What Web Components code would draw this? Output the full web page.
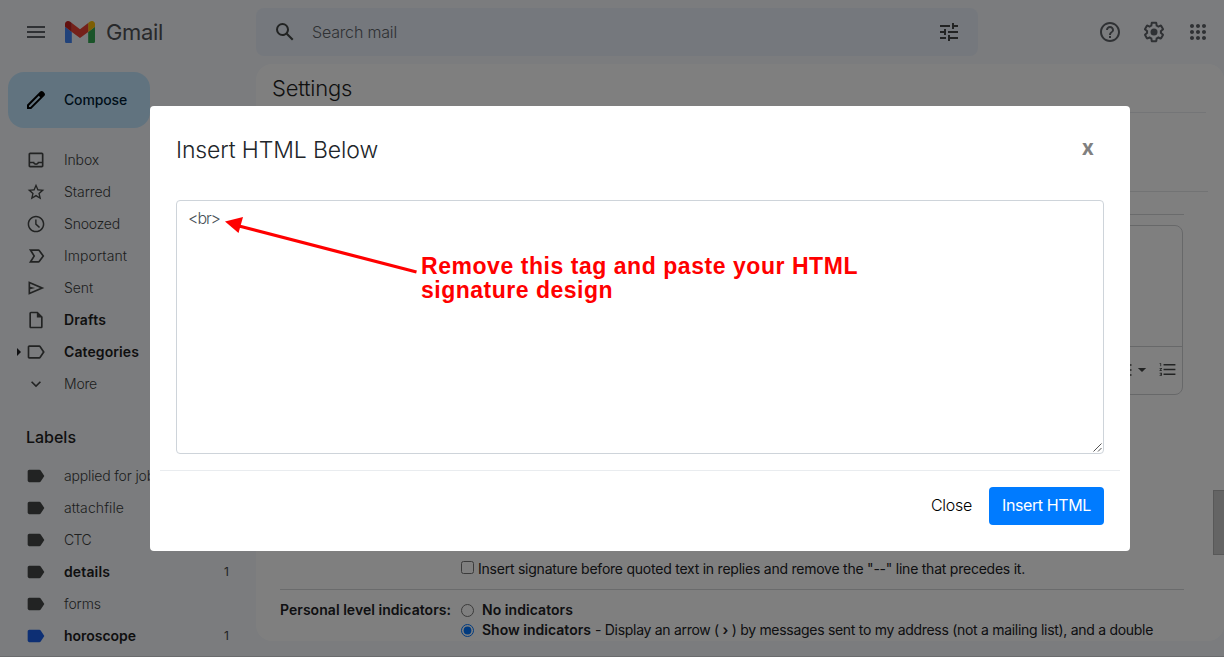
<!DOCTYPE html>
<html lang="en">
<head>
<meta charset="utf-8">
<title>Settings - Gmail</title>
<style>
  html, body { margin: 0; height: 100%; overflow: hidden; }
  body { font-family: Inter, "Liberation Sans", sans-serif; font-size: 14px; background: #f6f8fc; color: #202124; }
</style>
</head>
<body>
<gmail-app></gmail-app>
<modal-dialog heading="Insert HTML Below">
  <html-editor value="&lt;br&gt;">
    <arrow-note></arrow-note>
  </html-editor>
</modal-dialog>

<script>
const icons = {
  menu: '<path d="M3 18h18v-2H3v2zm0-5h18v-2H3v2zm0-7v2h18V6H3z"/>',
  pencil: '<path d="M20.41 4.94l-1.35-1.35c-.78-.78-2.05-.78-2.83 0L3 16.82V21h4.18L20.41 7.77c.79-.78.79-2.05 0-2.83zm-14 14.12L5 19v-1.36l9.82-9.82 1.41 1.41-9.82 9.83z"/>',
  search: '<path d="M20.49 19l-5.73-5.73C15.53 12.2 16 10.91 16 9.5A6.5 6.5 0 1 0 9.5 16c1.41 0 2.7-.47 3.77-1.24L19 20.49 20.49 19zM5 9.5C5 7.01 7.01 5 9.5 5S14 7.01 14 9.5 11.99 14 9.5 14 5 11.99 5 9.5z"/>',
  tune: '<path d="M3 17v2h6v-2H3zM3 5v2h10V5H3zm10 16v-2h8v-2h-8v-2h-2v6h2zM7 9v2H3v2h4v2h2V9H7zm14 4v-2H11v2h10zm-6-4h2V7h4V5h-4V3h-2v6z"/>',
  help: '<path d="M11 18h2v-2h-2v2zm1-16C6.48 2 2 6.48 2 12s4.48 10 10 10 10-4.48 10-10S17.52 2 12 2zm0 18c-4.41 0-8-3.59-8-8s3.59-8 8-8 8 3.59 8 8-3.59 8-8 8zm0-14c-2.21 0-4 1.79-4 4h2c0-1.1.9-2 2-2s2 .9 2 2c0 2-3 1.75-3 5h2c0-2.25 3-2.5 3-5 0-2.21-1.79-4-4-4z"/>',
  gear: '<path d="M13.85 22.25h-3.7c-.74 0-1.36-.54-1.45-1.27l-.27-1.89c-.27-.14-.53-.29-.79-.46l-1.8.72c-.7.26-1.47-.03-1.81-.65L2.2 15.53c-.35-.66-.2-1.44.36-1.88l1.53-1.19c-.01-.15-.02-.3-.02-.46 0-.15.01-.31.02-.46l-1.52-1.19c-.59-.45-.74-1.26-.37-1.88l1.85-3.19c.34-.62 1.11-.9 1.79-.63l1.81.73c.26-.17.52-.32.78-.46l.27-1.91c.09-.7.71-1.25 1.44-1.25h3.7c.74 0 1.36.54 1.45 1.27l.27 1.89c.27.14.53.29.79.46l1.8-.72c.71-.26 1.48.03 1.82.65l1.84 3.18c.36.66.2 1.44-.36 1.88l-1.52 1.19c.01.15.02.3.02.46s-.01.31-.02.46l1.52 1.19c.56.45.72 1.23.37 1.86l-1.86 3.22c-.34.62-1.11.9-1.8.63l-1.8-.72c-.26.17-.52.32-.78.46l-.27 1.91c-.1.68-.72 1.22-1.46 1.22zm-3.23-2h2.76l.37-2.55.53-.22c.44-.18.88-.44 1.34-.78l.45-.34 2.38.96 1.38-2.4-2.03-1.58.07-.56c.03-.26.06-.51.06-.78s-.03-.53-.06-.78l-.07-.56 2.03-1.58-1.39-2.4-2.39.96-.45-.35c-.42-.32-.87-.58-1.33-.77l-.52-.22-.37-2.55h-2.76l-.37 2.55-.53.21c-.44.19-.88.44-1.34.79l-.45.33-2.38-.95-1.39 2.39 2.03 1.58-.07.56a7 7 0 0 0-.06.79c0 .26.02.53.06.78l.07.56-2.03 1.58 1.38 2.4 2.39-.96.45.35c.43.33.86.58 1.33.77l.53.22.38 2.55z"/><circle cx="12" cy="12" r="3.5"/>',
  apps: '<path d="M6 8c1.1 0 2-.9 2-2s-.9-2-2-2-2 .9-2 2 .9 2 2 2zm6 12c1.1 0 2-.9 2-2s-.9-2-2-2-2 .9-2 2 .9 2 2 2zm-6 0c1.1 0 2-.9 2-2s-.9-2-2-2-2 .9-2 2 .9 2 2 2zm0-6c1.1 0 2-.9 2-2s-.9-2-2-2-2 .9-2 2 .9 2 2 2zm6 0c1.1 0 2-.9 2-2s-.9-2-2-2-2 .9-2 2 .9 2 2 2zm4-8c0 1.1.9 2 2 2s2-.9 2-2-.9-2-2-2-2 .9-2 2zm-4 2c1.1 0 2-.9 2-2s-.9-2-2-2-2 .9-2 2 .9 2 2 2zm6 6c1.1 0 2-.9 2-2s-.9-2-2-2-2 .9-2 2 .9 2 2 2zm0 6c1.1 0 2-.9 2-2s-.9-2-2-2-2 .9-2 2 .9 2 2 2z"/>',
  inbox: '<path d="M19 3H5c-1.1 0-2 .9-2 2v14c0 1.1.9 2 2 2h14c1.1 0 2-.9 2-2V5c0-1.1-.9-2-2-2zm0 16H5v-3h3.56c.69 1.19 1.97 2 3.45 2s2.75-.81 3.45-2H19v3zm0-5h-4.99c0 1.1-.9 2-2 2s-2-.9-2-2H5V5h14v9z"/>',
  star: '<path d="M22 9.24l-7.19-.62L12 2 9.19 8.63 2 9.24l5.46 4.73L5.82 21 12 17.27 18.18 21l-1.63-7.03L22 9.24zM12 15.4l-3.76 2.27 1-4.28-3.32-2.88 4.38-.38L12 6.1l1.71 4.04 4.38.38-3.32 2.88 1 4.28L12 15.4z"/>',
  clock: '<path d="M11.99 2C6.47 2 2 6.48 2 12s4.47 10 9.99 10C17.52 22 22 17.52 22 12S17.52 2 11.99 2zM12 20.2c-4.5 0-8.2-3.7-8.2-8.2S7.500 3.800 12 3.800s8.200 3.700 8.200 8.200-3.700 8.200-8.200 8.200zM12.700 6.500H11v6l4.600 4.300 1.300-1.300-4.200-3.800z"/>',
  important: '<path d="M4 20h11c.65 0 1.260-.31 1.630-.84L22 12l-5.370-7.160C16.260 4.310 15.650 4 15 4H3.500l5.200 8-5.200 8zm3.300-2l3.700-6-3.700-6H15l4.500 6L15 18H7.300z"/>',
  sent: '<path d="M3 20V4l19 8-19 8zm2-3l11.850-5L5 7v3.500l6 1.500-6 1.500V17z"/>',
  draft: '<path d="M14 2H6c-1.100 0-2 .9-2 2v16c0 1.100.9 2 2 2h12c1.100 0 2-.9 2-2V8l-6-6zM6 20V4h7v5h5v11H6z"/>',
  label: '<path d="M17.630 4.840C17.270 4.330 16.670 4 16 4L4 4.010C2.900 4.010 2 4.900 2 6v12c0 1.100.9 1.990 2 1.990L16 20c.67 0 1.270-.33 1.630-.84L22.500 12l-4.870-7.160zM16 18H4V6h12l4 6L16 18z"/>',
  more: '<path d="M16.590 8.590L12 13.170 7.410 8.590 6 10l6 6 6-6z"/>',
  tag: '<path d="M17.630 5.500C17.270 5 16.670 4.600 16 4.600L4 4.610C2.900 4.610 2 5.500 2 6.500v11c0 1 .9 1.890 2 1.890h12c.67 0 1.270-.33 1.630-.84L22 12z"/>',
  caret: '<path d="M7 9.500l5 5 5-5z"/>',
  numbered: '<path d="M2 17h2v.5H3v1h1v.5H2v1h3v-4H2v1zm1-9h1V4H2v1h1v3zm-1 3h1.800L2 13.100v.9h3v-1H3.200L5 10.900V10H2v1zm5-6v2h15V5H7zm0 14h15v-2H7v2zm0-6h15v-2H7v2z"/>',
  bulleted: '<path d="M4 10.500a1.500 1.500 0 1 0 0 3 1.500 1.500 0 0 0 0-3zm0-6a1.500 1.500 0 1 0 0 3 1.500 1.500 0 0 0 0-3zm0 12a1.500 1.500 0 1 0 0 3 1.500 1.500 0 0 0 0-3zM7 19h14v-2H7v2zm0-6h14v-2H7v2zm0-8v2h14V5H7z"/>'
};

class MailIcon extends HTMLElement {
  constructor() {
    super();
    this.attachShadow({ mode: 'open' });
  }
  connectedCallback() {
    const size = this.getAttribute('size') || 20;
    this.shadowRoot.innerHTML = `
      <style>
        :host { display: block; flex: none; width: ${size}px; height: ${size}px; }
        svg { display: block; fill: currentColor; }
      </style>
      <svg width="${size}" height="${size}" viewBox="0 0 24 24">${icons[this.getAttribute('name')]}</svg>
    `;
  }
}
customElements.define('mail-icon', MailIcon);

// One line of text, tracked so that it takes up the given width
class FitText extends HTMLElement {
  constructor() {
    super();
    this.attachShadow({ mode: 'open' }).innerHTML = `
      <style>
        :host { display: inline-block; white-space: nowrap; flex: none; }
      </style>
      <span><slot></slot></span>
    `;
  }
  connectedCallback() {
    const width = parseFloat(this.getAttribute('width'));
    const span = this.shadowRoot.querySelector('span');
    const length = this.textContent.length;
    const natural = span.getBoundingClientRect().width;
    if (natural) span.style.letterSpacing = `${(width - natural) / length}px`;
  }
}

class GmailLogo extends HTMLElement {
  constructor() {
    super();
    this.attachShadow({ mode: 'open' }).innerHTML = `
      <style>
        :host { display: flex; align-items: center; gap: 11px; font-size: 22px; color: #505357; }
        svg { display: block; }
      </style>
      <svg width="30" height="22.500" viewBox="52 42 88 66">
        <path fill="#4285f4" d="M58 108h14V74L52 59v43c0 3.320 2.690 6 6 6"/>
        <path fill="#34a853" d="M120 108h14c3.320 0 6-2.690 6-6V59l-20 15"/>
        <path fill="#fbbc04" d="M120 48v26l20-15v-8c0-7.420-8.470-11.650-14.400-7.200"/>
        <path fill="#ea4335" d="M72 74V48l24 18 24-18v26L96 92"/>
        <path fill="#c5221f" d="M52 51v8l20 15V48l-5.600-4.200c-5.940-4.450-14.400-.22-14.400 7.200"/>
      </svg>
      <fit-text width="57">Gmail</fit-text>
    `;
  }
}
customElements.define('gmail-logo', GmailLogo);

class TopBar extends HTMLElement {
  constructor() {
    super();
    this.attachShadow({ mode: 'open' }).innerHTML = `
      <style>
        :host { display: flex; align-items: center; height: 64px; box-sizing: border-box; padding: 0 14px 0 24px; color: #5f6368; }
        gmail-logo { margin-left: 17px; width: 191px; }
        .search { display: flex; align-items: center; width: 722px; height: 48px; box-sizing: border-box; padding: 0 17px; background: #eaf1fb; border-radius: 8px; font-size: 16px; font-weight: 350; }
        .search mail-icon { color: #444746; }
        .search fit-text { margin-left: 15px; }
        .search .tune { margin-left: auto; }
        .tools { display: flex; gap: 20px; margin-left: auto; }
      </style>
      <mail-icon name="menu" size="24"></mail-icon>
      <gmail-logo></gmail-logo>
      <div class="search">
        <mail-icon name="search" size="24"></mail-icon>
        <fit-text width="85">Search mail</fit-text>
        <mail-icon class="tune" name="tune" size="24"></mail-icon>
      </div>
      <div class="tools">
        <mail-icon name="help" size="24"></mail-icon>
        <mail-icon name="gear" size="24"></mail-icon>
        <mail-icon name="apps" size="24"></mail-icon>
      </div>
    `;
  }
}
customElements.define('top-bar', TopBar);

class NavItem extends HTMLElement {
  constructor() {
    super();
    this.attachShadow({ mode: 'open' });
  }
  connectedCallback() {
    const count = this.getAttribute('count') || '';
    const arrow = this.hasAttribute('expandable') ? '<i></i>' : '';
    this.shadowRoot.innerHTML = `
      <style>
        :host { display: flex; align-items: center; height: 32px; font-weight: 350; color: #3c3f3e; }
        :host([bold]) { font-weight: 600; color: #1f1f1f; }
        .arrow { display: flex; width: 26px; }
        i { margin-left: 17px; border: 4px solid transparent; border-left-color: #202124; border-right: 0; }
        mail-icon { color: ${this.getAttribute('color') || '#444746'}; }
        fit-text { margin-left: 18px; padding-bottom: 2px; }
        .count { margin-left: auto; margin-right: 27px; padding-bottom: 1px; font-size: 12px; font-weight: 400; color: #444746; }
      </style>
      <span class="arrow">${arrow}</span>
      <mail-icon name="${this.getAttribute('icon')}"></mail-icon>
      <fit-text width="${this.getAttribute('width')}">${this.textContent}</fit-text>
      <span class="count">${count}</span>
    `;
  }
}
customElements.define('nav-item', NavItem);

class SideNav extends HTMLElement {
  constructor() {
    super();
    this.attachShadow({ mode: 'open' }).innerHTML = `
      <style>
        :host { display: block; width: 256px; flex: none; padding-top: 8px; }
        .compose { display: flex; align-items: center; gap: 16px; width: 142px; height: 56px; box-sizing: border-box; margin: 0 0 16px 8px; padding-left: 16px; border-radius: 16px; background: #c2e7ff; color: #001d35; font-weight: 450; }
        .compose mail-icon { color: #000; }
        .compose fit-text { padding-bottom: 2px; }
        h3 { display: flex; align-items: center; height: 60px; box-sizing: border-box; margin: 0 0 0 26px; padding: 14px 0 0; font-size: 16px; font-weight: 450; color: #1f1f1f; }
      </style>
      <div class="compose"><mail-icon name="pencil" size="24"></mail-icon><fit-text width="63">Compose</fit-text></div>
      <nav>
        <nav-item icon="inbox" width="35">Inbox</nav-item>
        <nav-item icon="star" width="47">Starred</nav-item>
        <nav-item icon="clock" width="56">Snoozed</nav-item>
        <nav-item icon="important" width="63">Important</nav-item>
        <nav-item icon="sent" width="29">Sent</nav-item>
        <nav-item icon="draft" width="42" bold>Drafts</nav-item>
        <nav-item icon="label" width="75" bold expandable>Categories</nav-item>
        <nav-item icon="more" width="33">More</nav-item>
      </nav>
      <h3><fit-text width="50">Labels</fit-text></h3>
      <nav>
        <nav-item icon="tag" width="98">applied for jobs</nav-item>
        <nav-item icon="tag" width="60">attachfile</nav-item>
        <nav-item icon="tag" width="27">CTC</nav-item>
        <nav-item icon="tag" width="46" count="1" bold>details</nav-item>
        <nav-item icon="tag" width="37">forms</nav-item>
        <nav-item icon="tag" width="72" count="1" color="#1a5fe8" bold>horoscope</nav-item>
      </nav>
    `;
  }
}
customElements.define('side-nav', SideNav);

class SettingsPage extends HTMLElement {
  constructor() {
    super();
    this.attachShadow({ mode: 'open' }).innerHTML = `
      <style>
        :host { display: flex; flex: 1; height: 577px; background: #fff; border-radius: 16px; overflow: hidden; }
        .content { flex: 1; }
        h2 { display: flex; align-items: center; height: 48px; margin: 0 7px 0 0; padding-left: 16px; border-bottom: 1px solid #e9ebee; font-size: 22px; font-weight: 350; color: #1f1f1f; }
        .tabs { height: 78px; margin-right: 5px; border-bottom: 1px solid #e4e6e9; }
        .section { margin: 0 29px 0 24px; border-bottom: 1px solid #d4d6d9; }
        .before { height: 22px; }
        .signature { height: 375px; box-sizing: border-box; padding: 10px 1px 0 180px; display: flex; flex-direction: column; }
        .editor { height: 168px; border: 1px solid #ced0d3; border-radius: 8px; display: flex; flex-direction: column; }
        .edit { flex: 1; }
        .tools { display: flex; align-items: center; justify-content: flex-end; height: 45px; border-top: 1px solid #ced0d3; padding: 0 5px 2px 0; color: #444746; }
        .tools .num { margin-left: 6px; }
        .tools .caret { margin-left: -2px; }
        .option, .row { display: flex; align-items: center; }
        .option { height: 20px; }
        .check { margin-top: auto; height: 42px; }
        .indicators { display: flex; padding: 9px 0 0 24px; }
        .label { width: 180px; height: 20px; line-height: 20px; padding-top: 1px; }
        b, .label { font-weight: 600; }
        input { flex: none; width: 13px; height: 13px; margin: 0 8px 0 1px; }
        .check input { margin: -1px 4px 0 1px; }
        .radio input { margin-top: 3px; }
        .scroll { width: 11px; display: flex; flex-direction: column; background: #fff; }
        .scroll i { height: 65px; margin-top: 426px; box-sizing: border-box; background: #c9c9c9; border: 1px solid #b0b0b0; border-right: 0; }
      </style>
      <div class="content">
        <h2><fit-text width="80">Settings</fit-text></h2>
        <div class="tabs"></div>
        <div class="section before"></div>
        <div class="section signature">
          <div class="editor">
            <div class="edit"></div>
            <div class="tools">
              <mail-icon name="bulleted"></mail-icon>
              <mail-icon class="caret" name="caret"></mail-icon>
              <mail-icon class="num" name="numbered" size="19"></mail-icon>
            </div>
          </div>
          <div class="option check"><input type="checkbox"><fit-text width="547">Insert signature before quoted text in replies and remove the "--" line that precedes it.</fit-text></div>
        </div>
        <div class="indicators">
          <div class="label"><fit-text width="171">Personal level indicators:</fit-text></div>
          <div>
            <div class="option radio"><input type="radio" name="ind"><b><fit-text width="91">No indicators</fit-text></b></div>
            <div class="option radio"><input type="radio" name="ind" checked><b><fit-text width="109">Show indicators</fit-text></b><fit-text width="558" style="margin-left:4px">- Display an arrow ( <b>›</b> ) by messages sent to my address (not a mailing list), and a double</fit-text></div>
          </div>
        </div>
      </div>
      <div class="scroll"><i></i></div>
    `;
  }
}
customElements.define('settings-page', SettingsPage);

class GmailApp extends HTMLElement {
  constructor() {
    super();
    this.attachShadow({ mode: 'open' }).innerHTML = `
      <style>
        :host { display: flex; flex-direction: column; height: 656px; overflow: hidden; border-bottom: 1px solid #d4d7db; }
        main { display: flex; flex: 1; min-height: 0; }
      </style>
      <top-bar></top-bar>
      <main><side-nav></side-nav><settings-page></settings-page></main>
    `;
  }
}
customElements.define('gmail-app', GmailApp);

class HtmlEditor extends HTMLElement {
  constructor() {
    super();
    this.attachShadow({ mode: 'open' });
  }
  connectedCallback() {
    this.shadowRoot.innerHTML = `
      <style>
        :host { display: block; position: relative; height: 254px; box-sizing: border-box; padding: 5px 11px; border: 1px solid #ced4da; border-radius: 4px; background: #fff; color: #495057; font-size: 16px; font-weight: 350; line-height: 24px; }
        .grip { position: absolute; right: 0; bottom: 0; stroke: #555; fill: none; }
      </style>
      <div role="textbox"><fit-text width="32"></fit-text></div>
      <svg class="grip" width="11" height="11" viewBox="0 0 11 11"><path d="M1.500 9.500l8-8M6 9.500L9.500 6"/></svg>
      <slot></slot>
    `;
    this.shadowRoot.querySelector('fit-text').textContent = this.getAttribute('value');
  }
}
customElements.define('html-editor', HtmlEditor);

// Red pointer and hint that lie over the editor
class ArrowNote extends HTMLElement {
  constructor() {
    super();
    this.attachShadow({ mode: 'open' }).innerHTML = `
      <style>
        :host { position: absolute; left: 44px; top: 10px; display: block; color: #f00; font: bold 23px/24px "Liberation Sans", Arial, sans-serif; }
        svg { display: block; }
        p { position: absolute; left: 200px; top: 43px; margin: 0; display: flex; flex-direction: column; }
      </style>
      <svg width="200" height="66" viewBox="0 0 200 66">
        <path d="M18 15L195.500 61" stroke="#f00" stroke-width="3.200"/>
        <path d="M4 10.500L22 6l-4.500 16z" fill="#f00"/>
      </svg>
      <p><fit-text width="437">Remove this tag and paste your HTML</fit-text><fit-text width="192">signature design</fit-text></p>
    `;
  }
}
customElements.define('arrow-note', ArrowNote);

class ModalDialog extends HTMLElement {
  constructor() {
    super();
    this.attachShadow({ mode: 'open' });
  }
  connectedCallback() {
    this.shadowRoot.innerHTML = `
      <style>
        :host { position: fixed; inset: 0; display: flex; align-items: flex-start; justify-content: center; padding-left: 56px; background: rgba(0, 0, 0, .5); }
        .dialog { width: 980px; height: 445px; box-sizing: border-box; margin-top: 106px; padding: 0 10px; background: #fff; border-radius: 4px; }
        header { display: flex; align-items: center; justify-content: space-between; height: 88px; padding: 0 26px 0 16px; box-sizing: border-box; margin-bottom: 6px; }
        h5 { margin: 0; font-size: 23px; font-weight: 330; color: #212529; }
        .x { font: bold 21px/24px Inter, sans-serif; color: #808080; padding-bottom: 4px; }
        .body { padding: 0 16px 16px; }
        footer { display: flex; justify-content: flex-end; gap: 17px; padding: 16px; border-top: 1px solid #e9ecef; }
        button { height: 38px; border: 0; padding: 0 0 2px; background: none; font: 350 16px Inter, sans-serif; color: #000; }
        .primary { width: 115px; background: #007bff; color: #fff; border-radius: 4px; font-weight: 400; }
      </style>
      <div class="dialog">
        <header><h5><fit-text width="202">${this.getAttribute('heading')}</fit-text></h5><span class="x">x</span></header>
        <div class="body"><slot></slot></div>
        <footer>
          <button><fit-text width="41">Close</fit-text></button>
          <button class="primary"><fit-text width="89">Insert HTML</fit-text></button>
        </footer>
      </div>
    `;
  }
}
customElements.define('modal-dialog', ModalDialog);
// defined last, so that every text is laid out when it is measured
customElements.define('fit-text', FitText);
</script>
</body>
</html>
